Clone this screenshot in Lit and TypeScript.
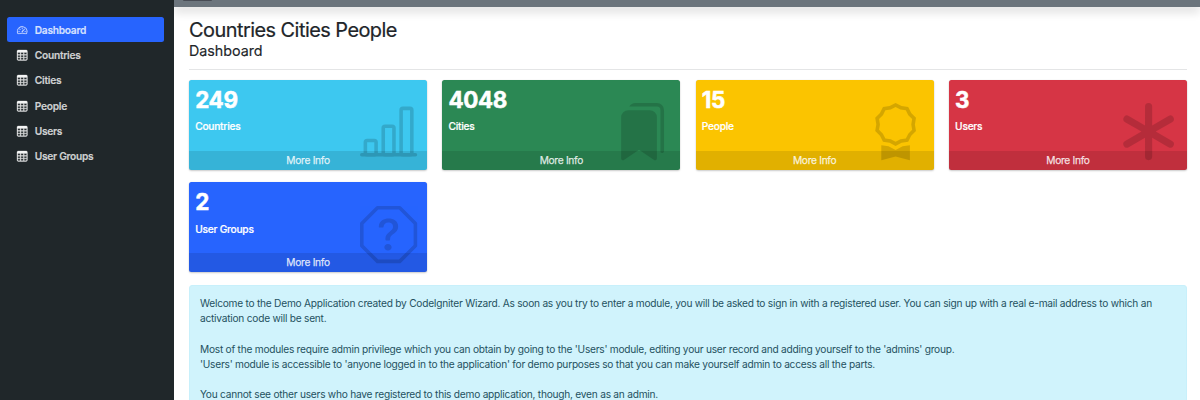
import { LitElement, html, css, svg } from "lit";
import { customElement, property } from "lit/decorators.js";
import { classMap } from "lit/directives/class-map.js";

const ICONS: Record<string, string[]> = {
  speedometer: [
    "M8 4a.5.5 0 0 1 .5.5V6a.5.5 0 0 1-1 0V4.5A.5.5 0 0 1 8 4zM3.732 5.732a.5.5 0 0 1 .707 0l.915.914a.5.5 0 1 1-.708.708l-.914-.915a.5.5 0 0 1 0-.707zM2 10a.5.5 0 0 1 .5-.5h1.586a.5.5 0 0 1 0 1H2.5A.5.5 0 0 1 2 10zm9.5 0a.5.5 0 0 1 .5-.5h1.5a.5.5 0 0 1 0 1H12a.5.5 0 0 1-.5-.5zm.754-4.246a.389.389 0 0 0-.527-.02L7.547 9.31a.91.91 0 1 0 1.302 1.258l3.434-4.297a.389.389 0 0 0-.029-.518z",
    "M0 10a8 8 0 1 1 15.547 2.661c-.442 1.253-1.845 1.602-2.932 1.25C11.309 13.488 9.475 13 8 13c-1.474 0-3.31.488-4.615.911-1.087.352-2.49.003-2.932-1.25A7.988 7.988 0 0 1 0 10zm8-7a7 7 0 0 0-6.603 9.329c.203.575.923.876 1.68.63C4.397 12.533 6.358 12 8 12s3.604.532 4.923.96c.757.245 1.477-.056 1.68-.631A7 7 0 0 0 8 3z",
  ],
  table: [
    "M0 2a2 2 0 0 1 2-2h12a2 2 0 0 1 2 2v12a2 2 0 0 1-2 2H2a2 2 0 0 1-2-2V2zm15 2h-4v3h4V4zm0 4h-4v3h4V8zm0 4h-4v3h3a1 1 0 0 0 1-1v-2zm-5 3v-3H6v3h4zm-5 0v-3H1v2a1 1 0 0 0 1 1h3zm-4-4h4V8H1v3zm0-4h4V4H1v3zm5-3v3h4V4H6zm4 4H6v3h4V8z",
  ],
  chart: [
    "M4 11H2v3h2v-3zm5-4H7v7h2V7zm5-5v12h-2V2h2zm-2-1a1 1 0 0 0-1 1v12a1 1 0 0 0 1 1h2a1 1 0 0 0 1-1V2a1 1 0 0 0-1-1h-2zM6 7a1 1 0 0 1 1-1h2a1 1 0 0 1 1 1v7a1 1 0 0 1-1 1H7a1 1 0 0 1-1-1V7zm-5 4a1 1 0 0 1 1-1h2a1 1 0 0 1 1 1v3a1 1 0 0 1-1 1H2a1 1 0 0 1-1-1v-3z",
    "M.5 14h15a.5.5 0 0 1 0 1H.5a.5.5 0 0 1 0-1z",
  ],
  bookmarks: [
    "M2 4a2 2 0 0 1 2-2h6a2 2 0 0 1 2 2v11.5a.5.5 0 0 1-.777.416L7 13.101l-4.223 2.815A.5.5 0 0 1 2 15.5V4z",
    "M4.268 1A2 2 0 0 1 6 0h6a2 2 0 0 1 2 2v11.5a.5.5 0 0 1-.777.416L13 13.768V2a1 1 0 0 0-1-1H4.268z",
  ],
  award: [
    "M9.669.864 8 0 6.331.864l-1.858.282-.842 1.68-1.337 1.32L2.6 6l-.306 1.854 1.337 1.32.842 1.68 1.858.282L8 12l1.669-.864 1.858-.282.842-1.68 1.337-1.32L13.4 6l.306-1.854-1.337-1.32-.842-1.68L9.669.864zm1.196 1.193.684 1.365 1.086 1.072L12.387 6l.248 1.506-1.086 1.072-.684 1.365-1.51.229L8 10.874l-1.355-.702-1.51-.229-.684-1.365-1.086-1.072L3.614 6l-.25-1.506 1.087-1.072.684-1.365 1.51-.229L8 1.126l1.356.702 1.509.229z",
    "M4 11.794V16l4-1 4 1v-4.206l-2.018.306L8 13.126 6.018 12.1 4 11.794z",
  ],
  asterisk: [
    "M8 0a1 1 0 0 1 1 1v5.268l4.562-2.634a1 1 0 1 1 1 1.732L10 8l4.562 2.634a1 1 0 1 1-1 1.732L9 9.732V15a1 1 0 1 1-2 0V9.732l-4.562 2.634a1 1 0 1 1-1-1.732L6 8 1.438 5.366a1 1 0 0 1 1-1.732L7 6.268V1a1 1 0 0 1 1-1z",
  ],
  question: [
    "M4.54.146A.5.5 0 0 1 4.893 0h6.214a.5.5 0 0 1 .353.146l4.394 4.394a.5.5 0 0 1 .146.353v6.214a.5.5 0 0 1-.146.353l-4.394 4.394a.5.5 0 0 1-.353.146H4.893a.5.5 0 0 1-.353-.146L.146 11.46A.5.5 0 0 1 0 11.107V4.893a.5.5 0 0 1 .146-.353L4.54.146zM5.1 1 1 5.1v5.8L5.1 15h5.8l4.1-4.1V5.1L10.9 1H5.1z",
    "M5.255 5.786a.237.237 0 0 0 .241.247h.825c.138 0 .248-.113.266-.25.09-.656.54-1.134 1.342-1.134.686 0 1.314.343 1.314 1.168 0 .635-.374.927-.965 1.371-.673.489-1.206 1.06-1.168 1.987l.003.217a.25.25 0 0 0 .25.246h.811a.25.25 0 0 0 .25-.25v-.105c0-.718.273-.927 1.01-1.486.609-.463 1.244-.977 1.244-2.056 0-1.511-1.276-2.241-2.673-2.241-1.267 0-2.655.59-2.75 2.286zm1.557 5.763c0 .533.425.927 1.01.927.609 0 1.028-.394 1.028-.927 0-.552-.42-.94-1.029-.94-.584 0-1.009.388-1.009.94z",
  ],
};

@customElement("ui-icon")
class UiIcon extends LitElement {
  @property() name = "table";
  static styles = css`
    :host { display: block; }
    .glyph { display: block; width: 100%; height: 100%; fill: currentColor; overflow: visible; }
    .table { stroke: currentColor; stroke-width: 0.45; }
    .speedometer { stroke: currentColor; stroke-width: 0.25; }
  `;
  render() {
    return html`<svg class="glyph ${this.name}" viewBox="0 0 16 16" fill-rule="evenodd" aria-hidden="true">
      ${(ICONS[this.name] ?? []).map((d) => svg`<path d=${d} />`)}
    </svg>`;
  }
}

@customElement("info-box")
class InfoBox extends LitElement {
  @property() value = "";
  @property() label = "";
  @property() icon = "";
  @property() tone = "info";
  static styles = css`
    :host { display: block; }
    .box {
      position: relative;
      height: 89.8px;
      box-sizing: border-box;
      display: flex;
      flex-direction: column;
      border-radius: 2.5px;
      overflow: hidden;
      color: #fff;
      box-shadow: 0 0 1px rgba(0, 0, 0, 0.14), 0 1px 2px rgba(0, 0, 0, 0.2);
    }
    .info { background: #3dc8f0; }
    .success { background: #2b8854; }
    .warning { background: #fbc400; }
    .danger { background: #d63545; }
    .primary { background: #2764fe; }
    .inner { flex: 1; padding: 7px 6.2px 0; }
    .value { margin: 0; font-size: 22.4px; line-height: 26.8px; font-weight: 700; letter-spacing: -0.35px; -webkit-text-stroke: 0.5px; }
    .label { margin: 5.9px 0 0; font-size: 10.2px; line-height: 15.2px; font-weight: 500; letter-spacing: -0.24px; -webkit-text-stroke: 0.2px; }
    .icon {
      position: absolute;
      right: 9.5px;
      top: 23.4px;
      width: 57.2px;
      height: 57.2px;
      color: #000;
      opacity: 0.15;
    }
    .more {
      height: 19.1px;
      line-height: 19.8px;
      text-align: center;
      font-size: 10.2px;
      letter-spacing: -0.3px;
      -webkit-text-stroke: 0.25px;
      background: rgba(0, 0, 0, 0.1);
      color: rgba(255, 255, 255, 0.8);
      text-decoration: none;
    }
  `;
  render() {
    return html`<div class="box ${this.tone}">
      <div class="inner">
        <h3 class="value">${this.value}</h3>
        <p class="label">${this.label}</p>
      </div>
      <ui-icon class="icon" name=${this.icon}></ui-icon>
      <a class="more">More Info</a>
    </div>`;
  }
}

const NAV = ["Dashboard", "Countries", "Cities", "People", "Users", "User Groups"];

const BOXES = [
  { value: "249", label: "Countries", icon: "chart", tone: "info" },
  { value: "4048", label: "Cities", icon: "bookmarks", tone: "success" },
  { value: "15", label: "People", icon: "award", tone: "warning" },
  { value: "3", label: "Users", icon: "asterisk", tone: "danger" },
  { value: "2", label: "User Groups", icon: "question", tone: "primary" },
];

@customElement("app-root")
class AppRoot extends LitElement {
  static styles = css`
    :host {
      display: block;
      height: 400px;
      overflow: hidden;
      font-family: Inter, "Liberation Sans", sans-serif;
      color: #212529;
      background: #fff;
    }
    .page { display: grid; grid-template-columns: 174px 1fr; height: 400px; }
    .sidebar {
      background: #20272a;
      padding: 17.1px 10px 0 7px;
      display: flex;
      flex-direction: column;
      height: 400px;
      box-sizing: border-box;
    }
    .item {
      display: flex;
      align-items: center;
      gap: 7.4px;
      height: 25.35px;
      padding-left: 10px;
      border-radius: 2.5px;
      font-size: 10.2px;
      font-weight: 600;
      letter-spacing: -0.27px;
      -webkit-text-stroke: 0.15px;
      color: #cfd1d2;
    }
    .item.active { background: #2764fe; color: #d5e0ff; }
    .nav-icon { width: 10.4px; height: 10.4px; color: #f4f5f5; }
    .active .nav-icon { color: #d5e0ff; }
    .main { min-width: 0; overflow: hidden; height: 400px; }
    .topbar {
      height: 7px;
      background: #6c757d;
      box-shadow: 0 5px 10px rgba(0, 0, 0, 0.15);
      padding-left: 9px;
    }
    .toggle { width: 29px; height: 1px; background: #484c55; border-radius: 0 0 2px 2px; }
    .content { padding: 11px 13px 0 15px; }
    .title { margin: 0; font-size: 19.9px; line-height: 24px; font-weight: 400; letter-spacing: -0.52px; -webkit-text-stroke: 0.2px; }
    .subtitle { margin: 0; font-size: 14.3px; line-height: 17px; font-weight: 400; letter-spacing: -0.02px; -webkit-text-stroke: 0.15px; }
    .rule { height: 1px; background: #e4e5e6; margin: 10px 0 9.8px; }
    .boxes { display: grid; grid-template-columns: repeat(4, 1fr); gap: 12.9px 15.2px; }
    .notice {
      margin-top: 12.6px;
      height: 160px;
      box-sizing: border-box;
      padding: 10.4px 10px;
      border: 1px solid #c8f0fb;
      border-radius: 3px;
      background: #d0f3fc;
      color: #245160;
      font-size: 10.17px;
      line-height: 15.2px;
      letter-spacing: -0.24px;
    }
    .para { margin: 0 0 15.2px; white-space: nowrap; }
  `;
  render() {
    return html`<div class="page">
      <nav class="sidebar">
        ${NAV.map(
          (label, i) => html`<a class=${classMap({ item: true, active: i === 0 })}>
            <ui-icon class="nav-icon" name=${i === 0 ? "speedometer" : "table"}></ui-icon>
            <span>${label}</span>
          </a>`
        )}
      </nav>
      <main class="main">
        <div class="topbar"><div class="toggle"></div></div>
        <div class="content">
          <h1 class="title">Countries Cities People</h1>
          <h2 class="subtitle">Dashboard</h2>
          <div class="rule"></div>
          <div class="boxes">
            ${BOXES.map(
              (b) => html`<info-box value=${b.value} label=${b.label} icon=${b.icon} tone=${b.tone}></info-box>`
            )}
          </div>
          <div class="notice">
            <p class="para">Welcome to the Demo Application created by CodeIgniter Wizard. As soon as you try to enter a module, you will be asked to sign in with a registered user. You can sign up with a real e-mail address to which an<br />activation code will be sent.</p>
            <p class="para">Most of the modules require admin privilege which you can obtain by going to the 'Users' module, editing your user record and adding yourself to the 'admins' group.<br />'Users' module is accessible to 'anyone logged in to the application' for demo purposes so that you can make yourself admin to access all the parts.</p>
            <p class="para">You cannot see other users who have registered to this demo application, though, even as an admin.</p>
          </div>
        </div>
      </main>
    </div>`;
  }
}
